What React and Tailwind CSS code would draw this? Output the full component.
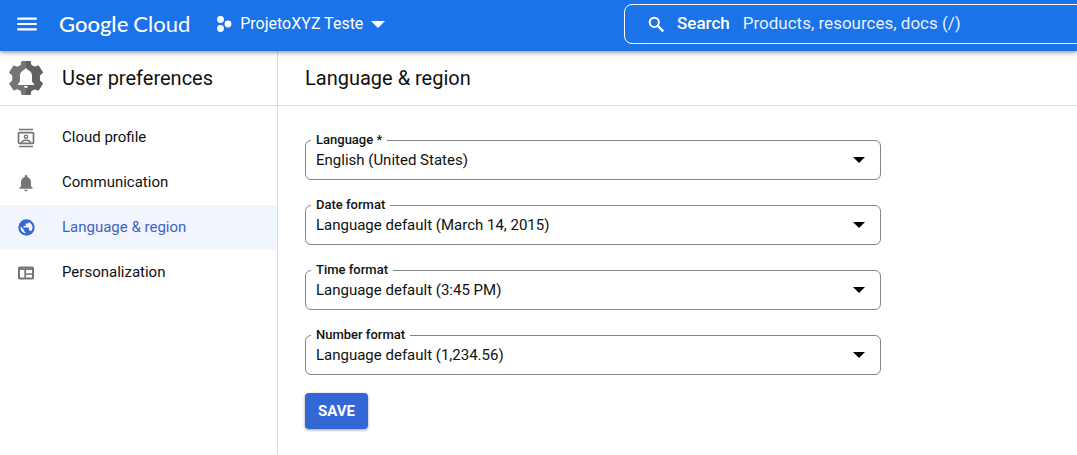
import { MdMenu, MdNotifications } from 'react-icons/md';

function SearchIcon() {
  return (
    <svg viewBox="0 0 21 21" className="h-[21px] w-[21px]" fill="none" stroke="currentColor" aria-hidden="true">
      <circle cx="8.300" cy="8.300" r="4.600" strokeWidth="2" />
      <path d="M11.800 11.800l5.500 5.500" strokeWidth="2.400" />
    </svg>
  );
}

function GlobeIcon() {
  return (
    <svg viewBox="0 0 24 24" className="h-[19px] w-[19px]" aria-hidden="true">
      <circle cx="12" cy="12" r="10.300" fill="currentColor" />
      <path
        d="M11 19.400c-3.800-.5-6.600-3.700-6.600-7.400 0-.5.100-1 .2-1.400L9 15v1c0 1.100.9 2 2 2zM17.700 16.800c-.3-.7-1-1-1.700-1h-1v-3c0-.5-.4-.9-1-.9H8.200V10H10c.6 0 1-.4 1-1V7h2c1.100 0 2-.9 2-1.800 2.700 1.200 4.600 3.800 4.600 6.800 0 1.800-.7 3.500-1.900 4.800z"
        fill="#f0f5fe"
      />
    </svg>
  );
}

function ContactsIcon() {
  return (
    <svg viewBox="0 0 18 20" className="h-5 w-[18px]" fill="none" stroke="currentColor" aria-hidden="true">
      <path d="M2 1.500h14M2 18.500h14" strokeWidth="1.600" />
      <rect x="1.500" y="4.700" width="15" height="10.600" rx="0.800" strokeWidth="1.700" />
      <circle cx="9" cy="8.700" r="1.600" strokeWidth="1.400" />
      <path d="M4.500 15c.5-2 2.500-2.700 4.500-2.700s4 .7 4.500 2.700" strokeWidth="1.500" />
    </svg>
  );
}

function PanelIcon() {
  return (
    <svg viewBox="0 0 18 14" className="h-3.5 w-[18px]" fill="none" stroke="currentColor" aria-hidden="true">
      <rect x="2" y="1.500" width="14" height="11" rx="0.800" strokeWidth="2" />
      <path d="M2 3.200h14M8.200 3v9.500M8.200 8h8" strokeWidth="1.700" />
    </svg>
  );
}

function GearBellIcon() {
  return (
    <svg viewBox="0 0 34 34" className="h-[34px] w-[34px] shrink-0" aria-hidden="true">
      <path
        d="M12.500 0h9l.8 4 3.200 1.800 4-1.400L34 11.500l-3.200 3v5l3.200 3-4.500 7.100-4-1.400-3.200 1.800-.8 4h-9l-.8-4-3.200-1.800-4 1.400L0 22.500l3.200-3v-5l-3.200-3 4.500-7.100 4 1.400L11.700 4z"
        fill="#757575"
      />
      <path
        d="M17 0h4.500l.8 4 3.200 1.800 4-1.400L34 11.500l-3.200 3v5l3.200 3-4.500 7.100-4-1.400-3.200 1.800-.8 4H17z"
        fill="#616161"
      />
      <path
        d="M17 7.500c-.9 0-1.600.7-1.600 1.600-2.900.8-4.400 3-4.400 5.900v5.500L9 23v1h16v-1l-2-2.500V15c0-2.900-1.500-5.100-4.400-5.900 0-.9-.7-1.600-1.600-1.600zm-2 17.500a2 2 0 0 0 4 0z"
        fill="#fff"
      />
    </svg>
  );
}

function ProjectIcon() {
  return (
    <svg viewBox="0 0 16 16" className="h-4 w-4" fill="currentColor" aria-hidden="true">
      <circle cx="4.500" cy="3.500" r="3.400" />
      <circle cx="4.500" cy="12.500" r="3.400" />
      <circle cx="12" cy="8" r="3.400" />
    </svg>
  );
}

function Caret({ className }) {
  return (
    <svg viewBox="0 0 12 6" className={className} fill="currentColor" aria-hidden="true">
      <path d="M0 0h12L6 6z" />
    </svg>
  );
}

const navItems = [
  { label: 'Cloud profile', icon: <ContactsIcon /> },
  { label: 'Communication', icon: <MdNotifications size={20} /> },
  { label: 'Language & region', icon: <GlobeIcon />, active: true },
  { label: 'Personalization', icon: <PanelIcon /> },
];

const fields = [
  { id: 'language', label: 'Language *', value: 'English (United States)' },
  { id: 'date-format', label: 'Date format', value: 'Language default (March 14, 2015)' },
  { id: 'time-format', label: 'Time format', value: 'Language default (3:45 PM)' },
  { id: 'number-format', label: 'Number format', value: 'Language default (1,234.56)' },
];

function SelectField({ id, label, value }) {
  return (
    <fieldset className="min-w-0 rounded-md border border-[#80868b] pb-[7px] pl-[5px]">
      <legend className="px-[5px] text-[13px] leading-4 font-medium">
        <label htmlFor={id} className="block">{label}</label>
      </legend>
      <div className="grid items-center">
        <select
          id={id}
          defaultValue={value}
          className="col-start-1 row-start-1 h-6 w-full appearance-none bg-transparent pr-10 pl-[5px] text-[15px] leading-6"
        >
          <option>{value}</option>
        </select>
        <Caret className="pointer-events-none col-start-1 row-start-1 mr-[15px] h-1.5 w-3 justify-self-end text-black" />
      </div>
    </fieldset>
  );
}

export default function App() {
  return (
    <div className="flex min-h-screen flex-col overflow-x-hidden bg-white font-['Roboto',sans-serif] text-[#111111]">
      <header className="relative z-10 flex h-[51px] shrink-0 items-center bg-[#1a73e8] pb-[3px] pl-3.5 text-white shadow-[0_1px_5px_rgba(0,0,0,0.5)]">
        <button type="button" aria-label="Main menu">
          <MdMenu size={26} />
        </button>
        <a href="#home" className="ml-[19px] flex gap-[5px] font-['Lato',sans-serif] text-[22px] leading-7">
          <span className="font-medium">Google</span>
          <span>Cloud</span>
        </a>
        <button type="button" className="ml-[26px] flex items-center text-base">
          <ProjectIcon />
          <span className="ml-2">ProjetoXYZ Teste</span>
          <Caret className="ml-2 h-[7px] w-3.5" />
        </button>
        <label className="-mr-2 ml-auto flex h-10 w-[461px] items-center rounded-lg border border-white pl-[21px]">
          <SearchIcon />
          <span className="ml-2.5 text-[17px] font-medium">Search</span>
          <input
            type="search"
            placeholder="Products, resources, docs (/)"
            className="ml-[13px] min-w-0 flex-1 bg-transparent text-[17px] outline-none placeholder:text-[#e8f0fe]"
          />
        </label>
      </header>

      <div className="flex flex-1">
        <aside className="w-[278px] shrink-0 border-r border-[#dadce0]">
          <div className="flex h-[55px] items-center border-b border-[#dadce0] pl-[9px]">
            <GearBellIcon />
            <h2 className="ml-[19px] text-xl">User preferences</h2>
          </div>
          <nav className="pt-[9px]">
            {navItems.map(({ label, icon, active }) => (
              <a
                key={label}
                href="#preferences"
                aria-current={active ? 'page' : undefined}
                className={
                  active
                    ? 'flex h-[45px] items-center bg-[#f0f5fe] pl-4 text-[15px] text-[#3f63c8]'
                    : 'flex h-[45px] items-center pl-4 text-[15px]'
                }
              >
                <span className={active ? 'flex w-5 justify-center text-[#3367d6]' : 'flex w-5 justify-center text-[#757575]'}>{icon}</span>
                <span className="ml-[26px]">{label}</span>
              </a>
            ))}
          </nav>
        </aside>

        <main className="min-w-0 flex-1">
          <div className="flex h-[55px] items-center border-b border-[#dadce0] pl-[27px]">
            <h1 className="text-xl">Language &amp; region</h1>
          </div>
          <form className="px-[27px] pt-[26px]" onSubmit={(e) => e.preventDefault()}>
            <div className="flex max-w-[576px] flex-col gap-[17px]">
              {fields.map((field) => (
                <SelectField key={field.id} {...field} />
              ))}
            </div>
            <button
              type="submit"
              className="mt-[18px] h-9 rounded bg-[#3367d6] px-[13px] text-[15px] font-bold text-white shadow-[0_1px_3px_rgba(0,0,0,0.4)]"
            >
              SAVE
            </button>
          </form>
        </main>
      </div>
    </div>
  );
}
